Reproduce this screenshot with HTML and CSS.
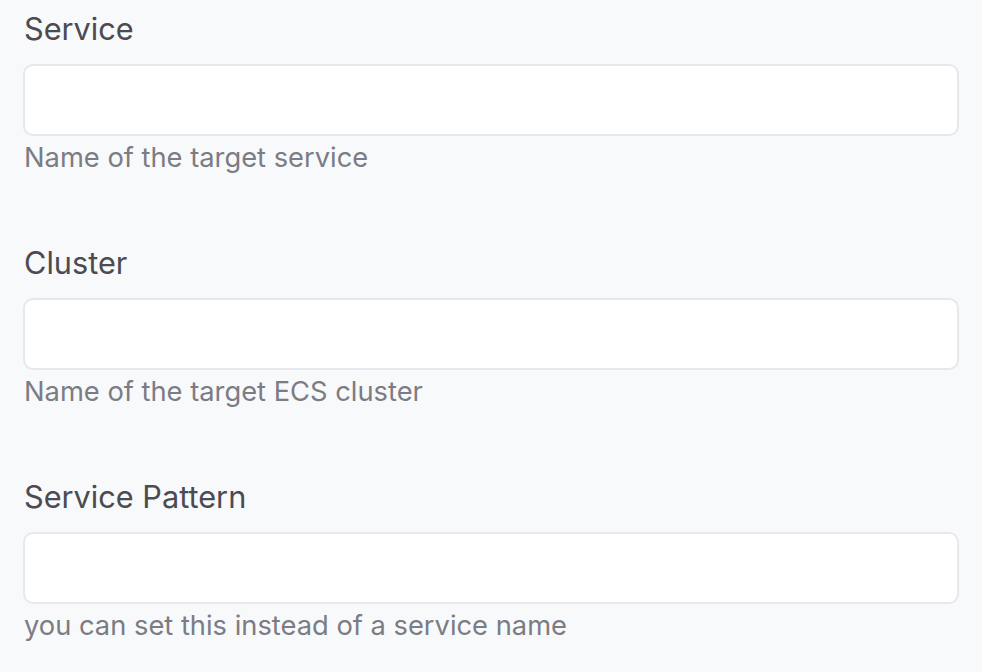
FILE: index.html
```html
<!DOCTYPE html>
<html lang="en">
<head>
<meta charset="utf-8">
<link rel="stylesheet" href="styles.css">
</head>
<body>
<form class="form">
  <div class="field">
    <label class="label">Service</label>
    <input class="input" type="text">
    <div class="help">Name of the target service</div>
  </div>
  <div class="field">
    <label class="label">Cluster</label>
    <input class="input" type="text">
    <div class="help">Name of the target ECS cluster</div>
  </div>
  <div class="field">
    <label class="label">Service Pattern</label>
    <input class="input" type="text">
    <div class="help">you can set this instead of a service name</div>
  </div>
</form>
</body>
</html>
```
FILE: styles.css
```css
html, body {
  margin: 0;
  padding: 0;
  background: #f8f9fb;
}
body {
  font-family: Inter, "Noto Sans", sans-serif;
}
.form {
  padding: 9px 23px 0 23px;
  display: flex;
  flex-direction: column;
  gap: 67px;
}
.field {
  display: flex;
  flex-direction: column;
}
.label {
  font-size: 30.7px;
  line-height: 40px;
  color: #4b4b51;
  padding-left: 1px;
  margin-bottom: 15px;
}
.input {
  box-sizing: border-box;
  height: 72px;
  width: 100%;
  border: 2px solid #e7e7ee;
  border-radius: 10px;
  background: #ffffff;
  margin: 0;
}
.help {
  font-size: 27.3px;
  line-height: 36px;
  color: #7b7c84;
  padding-left: 1px;
  margin-top: 4px;
}
```
